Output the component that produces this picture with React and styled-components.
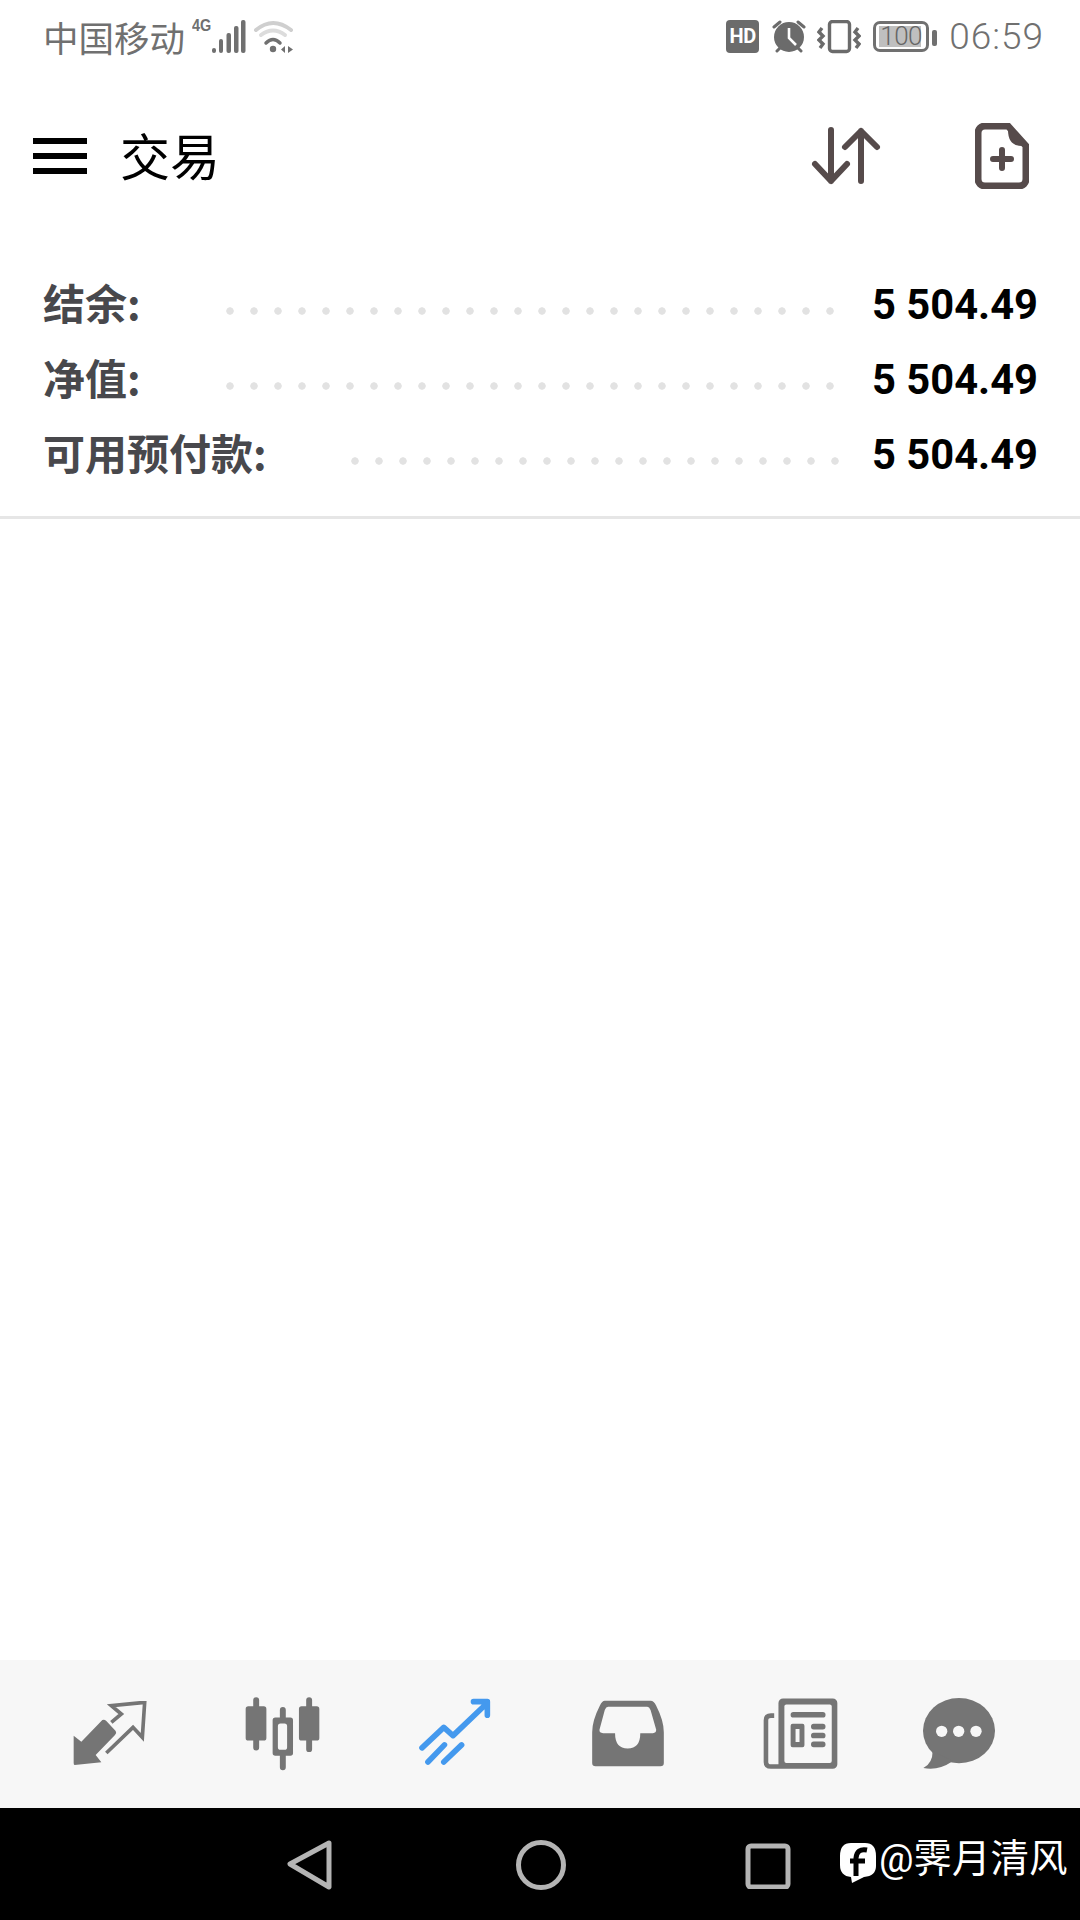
import React from "react";
import styled, { createGlobalStyle } from "styled-components";

const Global = createGlobalStyle`
  html, body { margin: 0; padding: 0; background: #fff; }
  * { box-sizing: border-box; }
`;

const CJK = `"Noto Sans CJK SC", "Noto Sans", sans-serif`;

const Screen = styled.div`
  width: 1080px;
  height: 1920px;
  display: flex;
  flex-direction: column;
  background: #fff;
  overflow: hidden;
  font-family: Roboto, ${CJK};
`;

const StatusBar = styled.div`
  height: 75px;
  flex: none;
  display: flex;
  align-items: flex-start;
  padding: 20px 36px 0 43px;
  color: #707070;
`;
const Carrier = styled.span`
  font: 400 35.5px/34px ${CJK};
  width: 148px;
  white-space: nowrap;
`;
const NetworkTag = styled.span`
  font: 700 17px/14px "Liberation Sans", sans-serif;
  width: 20px;
  margin: -1px 0 0 1px;
  transform: scaleX(0.85);
  transform-origin: left;
`;
const StatusSpacer = styled.div`
  flex: 1;
`;
const HdBadge = styled.span`
  width: 33px;
  height: 33px;
  border-radius: 4px;
  background: #6b6b6b;
  color: #fff;
  font: 700 20px/33px Roboto, sans-serif;
  letter-spacing: -0.5px;
  text-align: center;
`;
const Battery = styled.div`
  width: 56px;
  height: 31px;
  margin: 1px 0 0 12px;
  border: 3px solid #707070;
  border-radius: 7px;
  position: relative;
  color: #666;
  font: 300 26px/25px Roboto, sans-serif;
  text-align: center;
  letter-spacing: -0.5px;
  &::before {
    content: "";
    position: absolute;
    left: 3px;
    top: 2px;
    bottom: 2px;
    right: 5px;
    background: #bfbfbf;
    z-index: 0;
  }
  & > span {
    position: relative;
    z-index: 1;
  }
  &::after {
    content: "";
    position: absolute;
    right: -11px;
    top: 6px;
    width: 5px;
    height: 16px;
    border-radius: 2px;
    background: #707070;
  }
`;
const Clock = styled.span`
  font: 300 37px/34px Roboto, sans-serif;
  letter-spacing: 1px;
  margin-left: 20px;
  white-space: nowrap;
`;

const Header = styled.header`
  height: 170px;
  flex: none;
  padding: 0 51px 0 33px;
  display: flex;
  align-items: flex-start;
`;
const MenuButton = styled.div`
  width: 54px;
  margin-top: 63px;
  display: flex;
  flex-direction: column;
  gap: 9px;
  & > i {
    display: block;
    height: 6px;
    background: #000;
  }
`;
const Title = styled.h1`
  margin: 50px 0 0 33px;
  font: 400 50px/58px ${CJK};
  color: #000;
  flex: 1;
`;
const HeadIcon = styled.svg`
  display: block;
  flex: none;
  margin-top: ${(p) => p.$top}px;
  margin-right: ${(p) => p.$right || 0}px;
`;

const Summary = styled.section`
  padding: 20px 42px 26px 43px;
  border-bottom: 3px solid #e6e6e6;
  flex: none;
`;
const Row = styled.div`
  height: 75px;
  display: flex;
  align-items: center;
`;
const Label = styled.span`
  font: 700 42px/75px ${CJK};
  color: #48484c;
  white-space: nowrap;
  padding-bottom: 3px;
`;
const Leader = styled.span`
  flex: 1;
  height: 8px;
  margin: 16px ${(p) => p.$end}px 0 ${(p) => p.$start}px;
  background-image: radial-gradient(circle at 4px 4px, #e2e2e2 3.4px, transparent 4px);
  background-size: 24px 8px;
  background-repeat: repeat-x;
`;
const Value = styled.span`
  font: 700 41.7px/75px Roboto, sans-serif;
  color: #000;
  white-space: nowrap;
  padding-top: 3px;
`;

const Content = styled.main`
  flex: 1;
  background: #fff;
`;

const TabBar = styled.nav`
  height: 148px;
  flex: none;
  background: #f7f7f7;
  display: grid;
  grid-template-columns: 174px 171px 173px 173px 173px 144px;
  padding-left: 23px;
  align-items: center;
  justify-items: center;
`;
const TabIcon = styled.svg`
  display: block;
  fill: ${(p) => (p.$active ? "#4499ee" : "#757575")};
  stroke: none;
  transform: translateY(${(p) => p.$dy || 0}px);
`;

const NavBar = styled.footer`
  height: 112px;
  flex: none;
  background: #000;
  display: flex;
  align-items: flex-start;
  padding: 30px 0 0 285px;
`;
const NavIcon = styled.svg`
  display: block;
  flex: none;
  margin-right: ${(p) => p.$right}px;
  margin-top: ${(p) => p.$top || 0}px;
`;
const Watermark = styled.span`
  font: 400 38.5px/46px Roboto, ${CJK};
  color: #fff;
  white-space: nowrap;
  margin-left: 2px;
  margin-top: -2px;
`;

const rows = [
  { label: "结余:", start: 85, end: 34 },
  { label: "净值:", start: 85, end: 34 },
  { label: "可用预付款:", start: 84, end: 28 },
];

export default function App() {
  return (
    <Screen>
      <Global />
      <StatusBar>
        <Carrier>中国移动</Carrier>
        <NetworkTag>4G</NetworkTag>
        <svg width="36" height="34" viewBox="210 19 36 34" fill="#707070">
          <rect x="210" y="47" width="4" height="5" rx="2" />
          <rect x="217" y="38" width="4" height="14" rx="2" />
          <rect x="224.5" y="32" width="4.5" height="20" rx="2" />
          <rect x="232" y="25" width="4.5" height="27" rx="2" />
          <rect x="239" y="19" width="4.5" height="33" rx="2" />
        </svg>
        <svg width="42" height="34" viewBox="254 19 42 34" style={{ marginLeft: 5 }}>
          <path d="M257 29 Q274 15 292 29" fill="none" stroke="#cfcfcf" strokeWidth="4" strokeLinecap="round" />
          <path d="M262 34 Q274 25 286 34" fill="none" stroke="#dcdcdc" strokeWidth="4" strokeLinecap="round" />
          <path d="M267 42 Q274 35 281 42" fill="none" stroke="#707070" strokeWidth="3.5" strokeLinecap="round" />
          <circle cx="274" cy="48" r="3.2" fill="#707070" />
          <path d="M286 45 V52 L282 48.5 Z M289 45 V52 L294 48.5 Z" fill="#707070" />
        </svg>
        <StatusSpacer />
        <HdBadge>HD</HdBadge>
        <svg width="36" height="34" viewBox="772 20 36 34" style={{ marginLeft: 12 }}>
          <circle cx="790" cy="37" r="15" fill="#6b6b6b" />
          <path d="M790 28 V38 L797 45" fill="none" stroke="#fff" strokeWidth="2.6" />
          <path d="M775 27 L781 22 M799 22 L805 27 M778 51 L781 48 M802 51 L799 48" stroke="#6b6b6b" strokeWidth="3" strokeLinecap="round" />
        </svg>
        <svg width="44" height="34" viewBox="818 20 44 34" style={{ marginLeft: 10 }}>
          <rect x="830.5" y="21.5" width="20" height="30" rx="3" fill="none" stroke="#6b6b6b" strokeWidth="3.4" />
          <path d="M823 28 L820 32 L824 36 L820 40 L824 44 L821 48 M859 28 L856 32 L860 36 L856 40 L860 44 L857 48" fill="none" stroke="#6b6b6b" strokeWidth="3.4" />
        </svg>
        <Battery>
          <span>100</span>
        </Battery>
        <Clock>06:59</Clock>
      </StatusBar>

      <Header>
        <MenuButton>
          <i />
          <i />
          <i />
        </MenuButton>
        <Title>交易</Title>
        <HeadIcon $top={50} $right={93} width="72" height="60" viewBox="810 125 72 60" fill="none" stroke="#564b4b" strokeWidth="6" strokeLinecap="round" strokeLinejoin="round">
          <path d="M831 130 V181 M815 164 L831 181 L847 164" />
          <path d="M861 181 V131 M845 147 L861 131 L877 147" />
        </HeadIcon>
        <HeadIcon $top={48} width="54" height="66" viewBox="975 123 54 66" fill="none" stroke="#564b4b" strokeWidth="7" strokeLinecap="round" strokeLinejoin="round">
          <path d="M1008 126 H985 a7 7 0 0 0 -7 7 V179 a7 7 0 0 0 7 7 H1019 a7 7 0 0 0 7 -7 V146 Z" />
          <path d="M1007 125 L1028 146 H1022 Q1008 146 1008 130 Z" fill="#564b4b" stroke="none" />
          <path d="M1002 150 V168 M993 159 H1011" strokeWidth="6" />
        </HeadIcon>
      </Header>

      <Summary>
        {rows.map((r) => (
          <Row key={r.label}>
            <Label>{r.label}</Label>
            <Leader $start={r.start} $end={r.end} />
            <Value>5 504.49</Value>
          </Row>
        ))}
      </Summary>

      <Content />

      <TabBar>
        <TabIcon width="74" height="64" viewBox="100 96 222 192" $dy={-1}>
          <path d="M102 200 L125 218 L188 153 Q194 150 200 156 L228 186 Q232 192 226 198 L168 258 L185 280 L105 288 Q102 288 102 282 Z" />
          <path d="M215 160 L245 135 L215 110 L315 100 L308 205 L280 175 L200 252" fill="none" stroke="#757575" strokeWidth="11" />
        </TabIcon>
        <TabIcon width="75" height="74" viewBox="610 80 228 224" $dy={0}>
          <path fillRule="evenodd" d="M644 80 a9 9 0 0 1 9 9 V108 H667 a8 8 0 0 1 8 8 V204 a8 8 0 0 1 -8 8 H653 V233 a9 9 0 0 1 -18 0 V212 H620 a8 8 0 0 1 -8 -8 V116 a8 8 0 0 1 8 -8 H635 V89 a9 9 0 0 1 9 -9 Z" />
          <path fillRule="evenodd" d="M725 110 a9 9 0 0 1 9 9 V142 H748 a8 8 0 0 1 8 8 V250 a8 8 0 0 1 -8 8 H734 V293 a9 9 0 0 1 -18 0 V258 H702 a8 8 0 0 1 -8 -8 V150 a8 8 0 0 1 8 -8 H716 V119 a9 9 0 0 1 9 -9 Z M718 160 a8 8 0 0 0 -8 8 V232 a8 8 0 0 0 8 8 H730 a8 8 0 0 0 8 -8 V168 a8 8 0 0 0 -8 -8 Z" />
          <path d="M805 80 a9 9 0 0 1 9 9 V108 H828 a8 8 0 0 1 8 8 V204 a8 8 0 0 1 -8 8 H814 V238 a9 9 0 0 1 -18 0 V212 H782 a8 8 0 0 1 -8 -8 V116 a8 8 0 0 1 8 -8 H796 V89 a9 9 0 0 1 9 -9 Z" />
        </TabIcon>
        <TabIcon $active width="74" height="68" viewBox="1130 86 224 206" $dy={-2}>
          <path d="M1142 237 L1208 175 L1236 200 L1330 110 M1298 97 H1340 V138 M1160 280 L1210 228 M1208 280 L1262 228" fill="none" stroke="#4499ee" strokeWidth="17" strokeLinecap="round" strokeLinejoin="round" />
        </TabIcon>
        <TabIcon width="72" height="67" viewBox="92 88 216 202" $dy={-1}>
          <path fillRule="evenodd" d="M130 90 H268 Q278 90 285 105 Q308 150 308 185 V278 Q308 288 298 288 H102 Q92 288 92 278 V185 Q92 150 115 105 Q122 90 130 90 Z M140 108 H258 Q264 108 268 118 L285 178 Q285 188 275 188 H237 Q237 234 199 234 Q161 234 161 188 H125 Q113 188 114 178 L130 118 Q134 108 140 108 Z" />
        </TabIcon>
        <TabIcon width="75" height="72" viewBox="606 82 228 216" $dy={0}>
          <path fillRule="evenodd" d="M667 82 H818 a14 14 0 0 1 14 14 V282 a14 14 0 0 1 -14 14 H630 Q608 296 608 275 V148 Q608 127 630 127 H640 V141 H630 Q622 141 622 148 V275 Q622 282 630 282 H653 V96 a14 14 0 0 1 14 -14 Z M677 100 a6 6 0 0 0 -6 6 V272 a6 6 0 0 0 6 6 H809 a6 6 0 0 0 6 -6 V106 a6 6 0 0 0 -6 -6 Z" />
          <rect x="690" y="123" width="106" height="17" rx="8" />
          <path fillRule="evenodd" d="M696 159 H726 a6 6 0 0 1 6 6 V224 a6 6 0 0 1 -6 6 H696 a6 6 0 0 1 -6 -6 V165 a6 6 0 0 1 6 -6 Z M705 175 V214 H717 V175 Z" />
          <rect x="752" y="159" width="44" height="17" rx="8" />
          <rect x="752" y="186" width="44" height="17" rx="8" />
          <rect x="752" y="213" width="44" height="17" rx="8" />
        </TabIcon>
        <TabIcon width="72" height="72" viewBox="1086 82 216 216" $dy={0}>
          <ellipse cx="1194" cy="180" rx="108" ry="98" />
          <path d="M1115 240 Q1115 278 1087 292 Q1130 302 1175 272 Z" />
          <circle cx="1142" cy="182" r="17" fill="#f7f7f7" />
          <circle cx="1193" cy="182" r="17" fill="#f7f7f7" />
          <circle cx="1245" cy="182" r="17" fill="#f7f7f7" />
        </TabIcon>
      </TabBar>

      <NavBar>
        <NavIcon $right={182} width="48" height="54" viewBox="285 1838 48 54" fill="none" stroke="#b4b4b4" strokeWidth="5" strokeLinejoin="round">
          <path d="M329 1843 L290 1864 L329 1887 Z" />
        </NavIcon>
        <NavIcon $right={177} width="54" height="54" viewBox="514 1837 54 54" fill="none" stroke="#b4b4b4" strokeWidth="5" style={{ marginLeft: -1 }}>
          <circle cx="541" cy="1864" r="22.5" />
        </NavIcon>
        <NavIcon $right={48} $top={5} width="46" height="46" viewBox="747 1843 46 46" fill="none" stroke="#b4b4b4" strokeWidth="5" strokeLinejoin="round">
          <rect x="750" y="1846" width="40" height="41" rx="3" />
        </NavIcon>
        <NavIcon $right={0} $top={4} width="38" height="42" viewBox="838 1842 38 42">
          <path d="M850 1843 H864 Q875 1843 875 1856 V1866 Q875 1876 863 1877 L851 1883 L850 1877 Q839 1876 839 1865 V1856 Q839 1843 850 1843 Z" fill="#fff" />
          <path d="M866 1850 Q856 1848 855 1858 V1876 M849 1861 H864" fill="none" stroke="#000" strokeWidth="5" />
        </NavIcon>
        <Watermark>@霁月清风</Watermark>
      </NavBar>
    </Screen>
  );
}
